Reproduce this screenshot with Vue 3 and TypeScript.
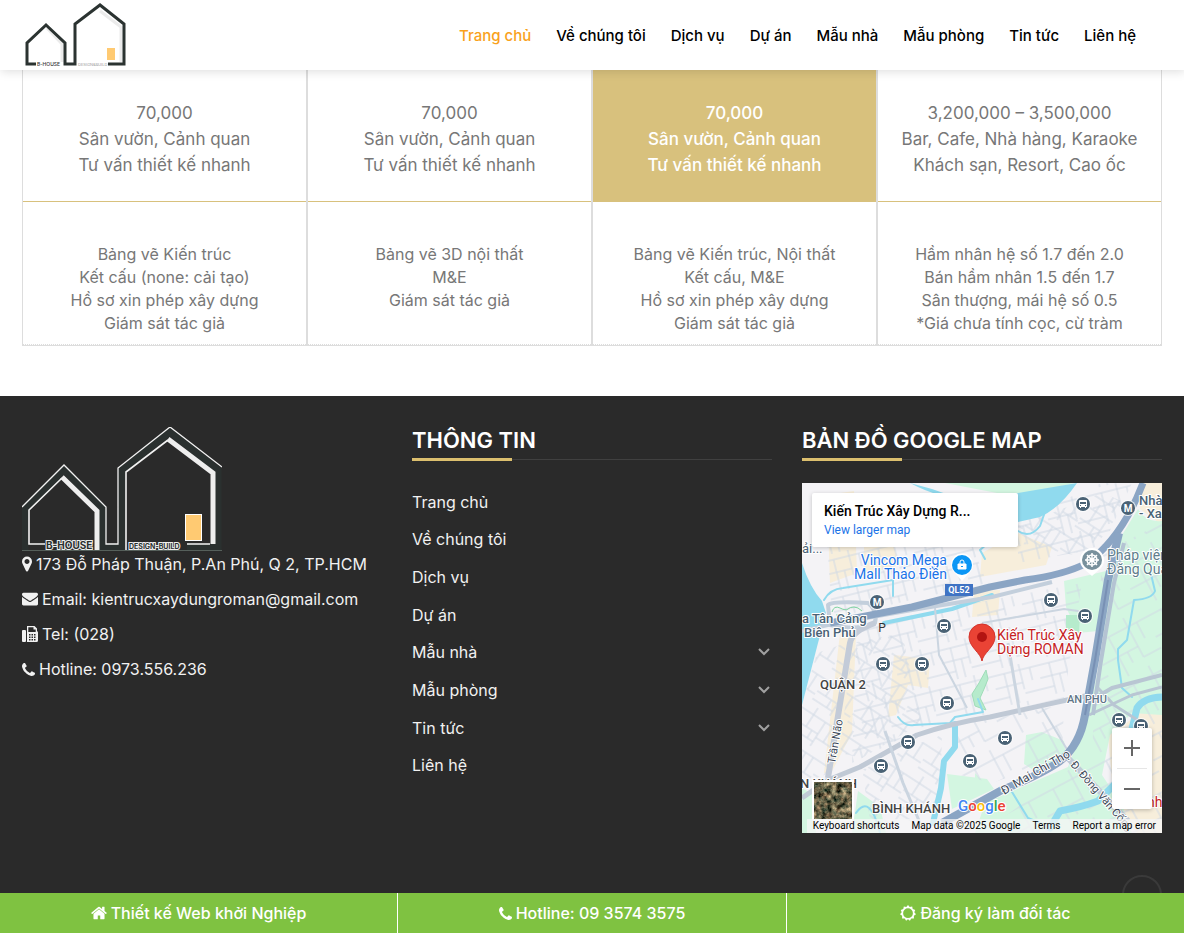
<script setup lang="ts">
interface NavItem {
  label: string
  active?: boolean
  expandable?: boolean
}

interface Plan {
  price: string[]
  details: string[]
  featured?: boolean
}

interface Road {
  d: string
  color: string
  width: number
}

const menu: NavItem[] = [
  { label: 'Trang chủ', active: true },
  { label: 'Về chúng tôi' },
  { label: 'Dịch vụ' },
  { label: 'Dự án' },
  { label: 'Mẫu nhà', expandable: true },
  { label: 'Mẫu phòng', expandable: true },
  { label: 'Tin tức', expandable: true },
  { label: 'Liên hệ' },
]

const plans: Plan[] = [
  {
    price: ['70,000', 'Sân vườn, Cảnh quan', 'Tư vấn thiết kế nhanh'],
    details: ['Bảng vẽ Kiến trúc', 'Kết cấu (none: cải tạo)', 'Hồ sơ xin phép xây dựng', 'Giám sát tác giả'],
  },
  {
    price: ['70,000', 'Sân vườn, Cảnh quan', 'Tư vấn thiết kế nhanh'],
    details: ['Bảng vẽ 3D nội thất', 'M&E', 'Giám sát tác giả'],
  },
  {
    price: ['70,000', 'Sân vườn, Cảnh quan', 'Tư vấn thiết kế nhanh'],
    details: ['Bảng vẽ Kiến trúc, Nội thất', 'Kết cấu, M&E', 'Hồ sơ xin phép xây dựng', 'Giám sát tác giả'],
    featured: true,
  },
  {
    price: ['3,200,000 – 3,500,000', 'Bar, Cafe, Nhà hàng, Karaoke', 'Khách sạn, Resort, Cao ốc'],
    details: ['Hầm nhân hệ số 1.7 đến 2.0', 'Bán hầm nhân 1.5 đến 1.7', 'Sân thượng, mái hệ số 0.5', '*Giá chưa tính cọc, cừ tràm'],
  },
]

const icons = {
  marker:
    'M1152 640q0-106-75-181t-181-75-181 75-75 181 75 181 181 75 181-75 75-181zm256 0q0 109-33 179l-364 774q-16 33-47.5 52t-67.5 19-67.5-19-46.5-52l-365-774q-33-70-33-179 0-212 150-362t362-150 362 150 150 362z',
  envelope:
    'M1792 710v794q0 66-47 113t-113 47h-1472q-66 0-113-47t-47-113v-794q44 49 101 87 362 246 497 345 57 42 92.5 65.5t94.5 48 110 24.5h2q51 0 110-24.5t94.5-48 92.5-65.5q170-123 498-345 57-39 100-87zm0-294q0 79-49 151t-122 123q-376 261-468 325-10 7-42.5 31t-54 38.5-52 32.5-57.5 27-50 9h-2q-23 0-50-9t-57.5-27-52-32.5-54-38.5-42.5-31q-91-64-262-182.5t-205-142.5q-62-42-117-115.5t-55-136.5q0-78 41.5-130t118.5-52h1472q65 0 112.5 47t47.5 113z',
  phone:
    'M1600 1240q0 27-10 70.5t-21 68.5q-21 50-122 106-94 51-186 51-27 0-53-3.5t-57.5-12.5-47-14.5-55.5-20.5-49-18q-98-35-175-83-127-79-264-216t-216-264q-48-77-83-175-3-9-18-49t-20.5-55.5-14.5-47-12.5-57.5-3.5-53q0-92 51-186 56-101 106-122 25-11 68.5-21t70.5-10q14 0 21 3 18 6 53 76 11 19 30 54t35 63.5 31 53.5q3 4 17.5 25t21.5 35.5 7 28.5q0 20-28.5 50t-62 55-62 53-28.5 46q0 9 5 22.5t8.5 20.5 14 24 11.5 19q76 137 174 235t235 174q2 1 19 11.5t24 14 20.5 8.5 22.5 5q18 0 46-28.5t53-62 55-62 50-28.5q14 0 28.5 7t35.5 21.5 25 17.5q25 15 53.5 31t63.5 35 54 30q70 35 76 53 3 7 3 21z',
  home: 'M1472 992v480q0 26-19 45t-45 19h-384v-384h-256v384h-384q-26 0-45-19t-19-45v-480q0-1 .5-3t.5-3l575-474 575 474q1 2 1 6zm223-69l-62 74q-8 9-21 11h-3q-13 0-21-7l-692-577-692 577q-12 8-24 7-13-2-21-11l-62-74q-8-10-7-23.5t11-21.5l719-599q32-26 76-26t76 26l244 204v-195q0-14 9-23t23-9h192q14 0 23 9t9 23v408l219 182q10 8 11 21.5t-7 23.5z',
}

const roads: Road[] = [
  { d: 'M0 148L30 141L110 127L190 114L250 99', color: '#c3cfdc', width: 4 },
  { d: 'M26 122Q30 118 66 120Q76 128 73 140Q60 148 28 142Z', color: '#c3cfdc', width: 4 },
  { d: 'M73 140Q50 148 48 160L46 172L35 239L26 295', color: '#c3cbd8', width: 6 },
  { d: 'M0 315L26 297L58 284L115 252Q150 240 188 234L283 213', color: '#c0c9d5', width: 5 },
  { d: 'M293 215L310 205L360 192', color: '#b9c6d3', width: 4 },
  { d: 'M287 232L330 212L360 204', color: '#b9c6d3', width: 3 },
  { d: 'M266 275L326 338', color: '#c0cbd8', width: 6 },
  { d: 'M322 60L312 100L299 178L291 232', color: '#b4c3d3', width: 4 },
  { d: 'M83 248L101 300L118 340', color: '#cbd5e0', width: 3 },
  { d: 'M206 160L218 232', color: '#cbd5e0', width: 3 },
  { d: 'M240 225L266 268', color: '#cbd5e0', width: 2 },
  { d: 'M133 125L137 172L165 225', color: '#cbd5e0', width: 2 },
  { d: 'M180 140L262 126L290 130', color: '#cbd5e0', width: 2 },
  { d: 'M296 205L312 222L340 240', color: '#b9c6d3', width: 3 },
  { d: 'M28 140L110 124L188 104L223 97Q262 92 285 80Q320 55 341 0', color: '#8ba5c4', width: 7 },
  { d: 'M317 50L306 97L293 177L283 232Q278 262 258 278Q240 291 200 307L140 340', color: '#8ba5c4', width: 8 },
  { d: 'M306 97L293 177L283 232', color: '#7890b4', width: 2 },
]

const busStops: number[][] = [
  [281, 21], [249, 117], [283, 133], [142, 143], [81, 181], [120, 181], [145, 220],
  [106, 259], [79, 283], [168, 278], [203, 255], [317, 237], [339, 243],
]
const metroStops: number[][] = [[75, 119], [326, 25]]
</script>

<template>
  <div class="page">
    <header class="header">
      <a class="logo" href="#" aria-label="B-House Design &amp; Build">
        <svg width="104" height="66" viewBox="0 0 104 66">
          <path d="M23 26L38 42V60M76 9L97 25V60" fill="none" stroke="#ebebeb" stroke-width="3" />
          <path d="M12 62H3V41L22 23L41 41V62H51V22L76 3L100 22V62H84" fill="none" stroke="#2b3331" stroke-width="3" />
          <rect x="83" y="46" width="8" height="12" fill="#ffca72" />
          <text x="13" y="64" font-size="5" font-weight="500" fill="#333">B-HOUSE</text>
          <text x="54" y="64" font-size="4" fill="#999">DESIGN&amp;BUILD</text>
        </svg>
      </a>
      <nav class="nav">
        <a v-for="item in menu" :key="item.label" href="#" :class="{ active: item.active }">{{ item.label }}</a>
      </nav>
    </header>

    <main class="plans">
      <ul v-for="(plan, i) in plans" :key="i" class="plan">
        <li class="price" :class="{ featured: plan.featured }">
          <span v-for="line in plan.price" :key="line">{{ line }}</span>
        </li>
        <li class="details">
          <span v-for="line in plan.details" :key="line">{{ line }}</span>
        </li>
      </ul>
    </main>

    <footer class="footer">
      <section class="contact">
        <svg class="footer-logo" width="200" height="124" viewBox="0 0 200 124">
          <path d="M3 124V81L42 43L80 81V120H100V43L148 5L196 43V120H165" fill="none" stroke="#2a302f" stroke-width="7" />
          <path d="M0 80L42 38L84 80V117H96V41L148 0L200 40" fill="none" stroke="#f2f2f2" stroke-width="1.3" />
          <path d="M23 117H7V83L40 51M104 124V45L146 13M165 117H188" fill="none" stroke="#f2f2f2" stroke-width="1.6" />
          <path d="M40 50L75 84V124M146 12L191 46V117" fill="none" stroke="#eee" stroke-width="5" />
          <path d="M0 123.500H200" stroke="#56605b" />
          <rect x="163.500" y="87.500" width="16" height="26" fill="#ffca72" stroke="#fff" />
          <text class="outlined" x="24" y="122" font-size="10">B-HOUSE</text>
          <text class="outlined" x="107" y="122" font-size="7">DESIGN-BUILD</text>
        </svg>
        <p>
          <svg width="10" height="16" viewBox="384 128 1024 1536"><path :d="icons.marker" /></svg>
          173 Đỗ Pháp Thuận, P.An Phú, Q 2, TP.HCM
        </p>
        <p>
          <svg width="16" height="14" viewBox="0 200 1792 1500"><path :d="icons.envelope" /></svg>
          Email: kientrucxaydungroman@gmail.com
        </p>
        <p>
          <svg width="16" height="16" viewBox="0 0 16 16">
            <rect x="0" y="4" width="4" height="12" rx="1" />
            <path fill-rule="evenodd" d="M5 0H12.500L15 2.500V5Q16 5.500 16 6.500V14.500Q16 16 14.500 16H5ZM6.300 1.300V6H13.700V3.500H11.500V1.300ZM7 8V9.500H8.500V8ZM9.500 8V9.500H11V8ZM12 8V9.500H13.500V8ZM7 10.500V12H8.500V10.500ZM9.500 10.500V12H11V10.500ZM12 10.500V12H13.500V10.500ZM7 13V14.500H8.500V13ZM9.500 13V14.500H11V13ZM12 13V14.500H13.500V13Z" />
          </svg>
          Tel: (028)
        </p>
        <p>
          <svg width="13" height="13" viewBox="192 128 1408 1408"><path :d="icons.phone" /></svg>
          Hotline: 0973.556.236
        </p>
      </section>

      <section>
        <h2>THÔNG TIN</h2>
        <ul class="links">
          <li v-for="item in menu" :key="item.label">
            <a href="#">{{ item.label }}</a>
            <button v-if="item.expandable" type="button" :aria-label="item.label">
              <svg width="12" height="8" viewBox="0 0 12 8"><path d="M1 1L6 6L11 1" fill="none" stroke="#a0a0a0" stroke-width="2" /></svg>
            </button>
          </li>
        </ul>
      </section>

      <section>
        <h2>BẢN ĐỒ GOOGLE MAP</h2>
        <div class="map">
          <svg class="map-canvas" viewBox="0 0 360 350" preserveAspectRatio="xMidYMid slice">
            <defs>
              <pattern id="streets-a" width="46" height="38" patternUnits="userSpaceOnUse" patternTransform="rotate(-14)">
                <path d="M0 6H46M0 19H28M12 6V38M28 0V26M28 30H46M38 6V19M0 30H12M20 19V38" />
              </pattern>
              <pattern id="streets-b" width="42" height="36" patternUnits="userSpaceOnUse" patternTransform="rotate(33)">
                <path d="M0 8H42M0 22H24M10 0V22M24 8V36M33 8V26M24 26H42M0 31H24M17 22V31" />
              </pattern>
              <pattern id="streets-c" width="60" height="54" patternUnits="userSpaceOnUse" patternTransform="rotate(-28)">
                <path d="M0 10H60M0 32H40M18 10V54M40 0V44M40 44H60M28 32V44M50 10V28" />
              </pattern>
              <filter id="aerial" x="0" y="0" width="1" height="1" color-interpolation-filters="sRGB">
                <feTurbulence type="fractalNoise" baseFrequency="0.2" numOctaves="4" seed="4" />
                <feColorMatrix values="1.2 0 0 0 -0.2  1 0.2 0 0 -0.22  0.8 0.2 0 0 -0.22  0 0 0 0 1" />
              </filter>
            </defs>
            <rect width="360" height="350" fill="#f4f3f6" />
            <g fill="#f7eedb">
              <path d="M25 12L52 8L55 90L28 100ZM62 64L92 64L98 82L62 92ZM216 50L250 64L244 82L178 94L180 70ZM92 172L128 176L126 205L106 202L94 232L86 234ZM172 108L198 107L196 132L170 134ZM38 150L54 150L50 250L28 292L22 290ZM341 0H360V42L338 26ZM306 252L345 226L360 232V350H335L312 320Z" />
            </g>
            <g fill="#d3f6e1">
              <path d="M143 0H272L216 14ZM320 52L336 26Q344 40 360 38V232L330 230L308 252L300 292L320 322L330 350H173L183 320L266 284L286 232L298 178L308 97ZM262 98L304 88L296 148L276 150L264 124ZM224 252L240 249L262 258L264 274L236 290L222 281ZM145 291L185 296L192 306L150 326ZM0 305L12 312L14 350H0ZM56 308L78 324L84 350H50ZM173 290L184 302L173 310Z" />
            </g>
            <g>
              <path d="M22 10H150L185 100L30 135ZM216 37L300 0H330L300 65L216 80Z" fill="url(#streets-a)" />
              <path d="M55 142L280 100L262 215L190 230L120 245L50 280Z" fill="url(#streets-a)" />
              <path d="M0 220L15 170L44 160L28 290L0 300ZM50 160L100 150L120 240L60 275L38 270ZM60 287L140 250L138 330L70 350Z" fill="url(#streets-b)" />
              <path d="M155 240L262 222L260 275L190 300L150 290ZM300 70L360 40V350H180L290 270Z" fill="url(#streets-c)" />
              <path d="M216 12L250 30L300 10L325 20L285 75L216 60Z" fill="url(#streets-b)" />
            </g>
            <path d="M184 187L177 200L170 211L173 223L184 227L178 215L182 206L186 196Z" fill="#b6ebcc" stroke="#9fdcb8" />
            <path d="M264 132L278 132L277 150L264 147Z" fill="#b6ebcc" />
            <g fill="none" stroke="#90daee" stroke-linecap="round" stroke-linejoin="round">
              <path d="M22 117Q28 106 41 105L91 97V113M216 48Q228 56 238 43L244 26M96 234Q103 244 112 242L148 240L153 234L181 229L176 216M348 87L353 108Q350 116 332 117L325 157L316 166V177L320 205L330 214M183 76L178 67L192 55M54 330Q68 310 78 350M210 309L226 335L238 340" stroke-width="2" />
              <path d="M82 140L150 126L190 112" stroke-width="4" />
              <path d="M153 241V264L142 278L139 305L131 340" stroke-width="6" />
              <path d="M248 345L258 328Q280 324 296 318L318 296L335 225Q342 214 362 214" stroke-width="7" />
            </g>
            <path d="M108 0Q160 28 216 10L275 0Q258 25 238 34L216 39L170 20L130 6Z" fill="#90daee" />
            <path d="M0 80Q8 105 20 118L24 130L16 160L0 222Z" fill="#90daee" />
            <path v-for="(road, i) in roads" :key="i" :d="road.d" :stroke="road.color" :stroke-width="road.width" fill="none" stroke-linejoin="round" />
            <path d="M30 129Q32 122 38 125T46 126T52 124T60 128M34 132H38" fill="none" stroke="#7fd3a0" />

            <g v-for="([x, y], i) in busStops" :key="'bus' + i" :transform="`translate(${x} ${y})`">
              <circle r="8" fill="#fff" opacity="0.8" />
              <circle r="7" fill="#4a6275" />
              <path fill-rule="evenodd" fill="#fff" d="M-4 -3Q-4 -4 -3 -4H3Q4 -4 4 -3V3H3V4H2V3H-2V4H-3V3H-4ZM-3 -2V0H3V-2ZM-3 1V2H-2V1ZM2 1V2H3V1Z" />
            </g>
            <g v-for="([x, y], i) in metroStops" :key="'metro' + i" :transform="`translate(${x} ${y})`">
              <circle r="8" fill="#fff" opacity="0.8" />
              <circle r="7" fill="#4a6275" />
              <text y="4" font-size="10" font-weight="700" fill="#fff" text-anchor="middle">M</text>
            </g>
            <text x="80" y="149" font-size="12" fill="#333" text-anchor="middle">P</text>

            <rect x="143" y="101" width="28" height="12" fill="#3f73c4" />
            <text x="157" y="110" font-size="9" font-weight="700" fill="#fff" text-anchor="middle">QL52</text>

            <g class="halo" font-size="14">
              <g fill="#1a73e8" text-anchor="end">
                <text x="145" y="82">Vincom Mega</text>
                <text x="145" y="96">Mall Thảo Điền</text>
              </g>
              <g fill="#4a6275" font-size="13">
                <text x="0" y="70">ải...</text>
                <text x="0" y="140" font-weight="500">a Tân Cảng</text>
                <text x="2" y="154" font-weight="500">Biên Phủ</text>
                <text x="337" y="22" font-weight="500">Nhà</text>
                <text x="337" y="35" font-weight="500">- Xa</text>
              </g>
              <g fill="#607d8b">
                <text x="305" y="77">Pháp viện</text>
                <text x="305" y="91">Đăng Quang</text>
              </g>
              <g fill="#c5221f">
                <text x="195" y="157">Kiến Trúc Xây</text>
                <text x="195" y="171">Dựng ROMAN</text>
                <text x="345" y="324">nh</text>
              </g>
              <g fill="#444" font-size="13" font-weight="500">
                <text x="18" y="206">QUẬN 2</text>
                <text x="-2" y="305">N KHÁNH</text>
                <text x="70" y="330">BÌNH KHÁNH</text>
                <text x="265" y="220" font-size="11" fill="#5f7486">AN PHU</text>
              </g>
              <g fill="#3c4858" font-size="12">
                <text transform="translate(33 281) rotate(-80)" font-size="11">Trần Não</text>
                <text transform="translate(202 312) rotate(-30)">Đ. Mai Chí Thọ</text>
                <text transform="translate(268 282) rotate(49)" font-size="11">Đ. Đồng Văn Cống</text>
              </g>
            </g>

            <path d="M160 98L153 90A11 11 0 1 1 167 90Z" fill="#fff" />
            <circle cx="160" cy="82" r="10" fill="#0b96f5" />
            <path d="M156 81H164V86H156Z" fill="#fff" stroke="#fff" />
            <path d="M158 81V79Q158 77 160 77T162 79V81" fill="none" stroke="#fff" />
            <path d="M159 83Q160 85 161 83" fill="none" stroke="#0b96f5" />
            <path d="M290 93L282 86A12 12 0 1 1 298 86Z" fill="#fff" />
            <circle cx="290" cy="77" r="10" fill="#78909c" />
            <circle cx="290" cy="77" r="5" fill="none" stroke="#fff" stroke-width="1.500" />
            <path d="M283 77H297M290 70V84M285 72L295 82M285 82L295 72" stroke="#fff" stroke-width="1.500" />
            <path d="M180 178C179 170 167 164 167 154A13 13 0 0 1 193 154C193 164 181 170 180 178Z" fill="#ea4335" stroke="#d3322a" />
            <circle cx="180" cy="154" r="5" fill="#b31412" />

            <g class="halo" font-size="15" font-weight="500">
              <text x="156" y="328"><tspan fill="#4285f4">G</tspan><tspan fill="#ea4335">o</tspan><tspan fill="#fbbc04">o</tspan><tspan fill="#4285f4">g</tspan><tspan fill="#34a853">l</tspan><tspan fill="#ea4335">e</tspan></text>
            </g>
            <rect x="10" y="297" width="42" height="41" fill="#fff" />
            <rect x="12" y="299" width="38" height="37" filter="url(#aerial)" />
          </svg>

          <div class="place">
            <strong>Kiến Trúc Xây Dựng R...</strong>
            <a href="#">View larger map</a>
          </div>
          <div class="zoom">
            <button type="button" aria-label="Zoom in">
              <svg width="18" height="18" viewBox="0 0 18 18"><path d="M1 9H17M9 1V17" stroke="#666" stroke-width="2" /></svg>
            </button>
            <button type="button" aria-label="Zoom out">
              <svg width="18" height="18" viewBox="0 0 18 18"><path d="M1 9H17" stroke="#666" stroke-width="2" /></svg>
            </button>
          </div>
          <div class="legal">
            <button type="button">Keyboard shortcuts</button>
            <span>Map data ©2025 Google</span>
            <a href="#">Terms</a>
            <a href="#">Report a map error</a>
          </div>
        </div>
      </section>
      <button class="to-top" type="button" aria-label="Back to top"></button>
    </footer>

    <nav class="bottom-bar">
      <a href="#">
        <svg width="16" height="14" viewBox="64 192 1664 1408"><path :d="icons.home" /></svg>
        Thiết kế Web khởi Nghiệp
      </a>
      <a href="#">
        <svg width="13" height="13" viewBox="192 128 1408 1408"><path :d="icons.phone" /></svg>
        Hotline: 09 3574 3575
      </a>
      <a href="#">
        <svg width="16" height="16" viewBox="0 0 16 16">
          <path fill-rule="evenodd" d="M8 0L9.700 2L12.200 1.400L12.700 4L15.200 4.900L14.300 7.300L16 9.200L13.900 10.800L13.900 13.400L11.300 13.400L9.900 15.700L8 14.200L6.100 15.700L4.700 13.400L2.100 13.400V10.800L0 9.200L1.700 7.300L0.800 4.900L3.300 4L3.800 1.400L6.300 2ZM8 3.300A4.900 4.900 0 1 0 8 13.100A4.900 4.900 0 1 0 8 3.300Z" />
        </svg>
        Đăng ký làm đối tác
      </a>
    </nav>
  </div>
</template>

<style>
body {
  margin: 0;
}
</style>

<style scoped>
.page {
  display: flex;
  flex-direction: column;
  min-height: 100vh;
  background: #fff;
  color: #777;
  font-family: Inter, "Liberation Sans", sans-serif;
  font-size: 16px;
}
.page * {
  box-sizing: border-box;
}
a {
  color: inherit;
  text-decoration: none;
}
ul {
  margin: 0;
  padding: 0;
  list-style: none;
}
button {
  border: 0;
  padding: 0;
  background: none;
  color: inherit;
  font: inherit;
  cursor: pointer;
}

.header {
  position: relative;
  z-index: 1;
  display: flex;
  align-items: center;
  justify-content: space-between;
  height: 70px;
  padding: 0 48px 0 24px;
  background: #fff;
  box-shadow: 1px 1px 10px rgba(0, 0, 0, 0.15);
}
.logo svg {
  display: block;
}
.nav {
  display: flex;
  gap: 25px;
  color: #000;
  font-size: 15px;
  font-weight: 500;
}
.nav .active {
  color: #f9a11b;
}

.plans {
  display: grid;
  grid-template-columns: repeat(4, 1fr);
  padding: 0 22px 50px;
  text-align: center;
}
.plan {
  display: flex;
  flex-direction: column;
  border: 1px solid #ddd;
  border-top: 0;
}
.plan span {
  display: block;
}
.price {
  padding: 30px 0 23px;
  border-bottom: 1px solid #d8c17d;
  font-size: 17px;
  line-height: 26px;
}
.featured {
  background: #d8c17d;
  color: #fff;
  font-weight: 500;
}
.details {
  flex: 1;
  padding: 41px 0 9px;
  border-bottom: 1px dotted #ddd;
  font-size: 16px;
  line-height: 23px;
}

.footer {
  position: relative;
  flex: 1;
  display: grid;
  grid-template-columns: repeat(3, minmax(0, 1fr));
  gap: 30px;
  overflow: hidden;
  padding: 31px 22px 60px;
  background: #2a2a2a;
  color: #f1f1f1;
}
.footer-logo {
  display: block;
}
.outlined {
  fill: #2a302f;
  stroke: #eee;
  stroke-width: 2px;
  paint-order: stroke;
  font-weight: 700;
}
.contact p {
  display: flex;
  align-items: center;
  gap: 4px;
  margin: 0 0 9px;
  font-size: 16px;
  line-height: 26px;
  white-space: nowrap;
}
.contact p svg,
.bottom-bar svg {
  flex: none;
  fill: currentColor;
}
h2 {
  position: relative;
  margin: 0 0 23px;
  padding-bottom: 6px;
  border-bottom: 1px solid #404040;
  color: #fff;
  font-size: 22px;
  font-weight: 600;
  line-height: 26px;
}
h2::after {
  content: "";
  position: absolute;
  left: 0;
  bottom: -2px;
  width: 100px;
  height: 3px;
  background: #dcbf6e;
}
.links {
  display: grid;
  grid-template-rows: repeat(8, 1fr);
  height: 301px;
  font-size: 16px;
}
.links li {
  display: flex;
  align-items: center;
  justify-content: space-between;
}
.links svg {
  display: block;
  margin-right: 2px;
}

.map {
  position: relative;
  height: 350px;
  overflow: hidden;
  font-family: Roboto, sans-serif;
}
.map-canvas {
  display: block;
  width: 100%;
  height: 100%;
}
pattern path {
  fill: none;
  stroke: #d0d9e4;
  stroke-width: 1px;
}
.halo text {
  stroke: #fff;
  stroke-width: 2px;
  stroke-linejoin: round;
  paint-order: stroke;
}
.place {
  position: absolute;
  top: 10px;
  left: 10px;
  display: flex;
  flex-direction: column;
  gap: 3px;
  width: 206px;
  height: 54px;
  padding: 10px 12px;
  background: #fff;
  border-radius: 2px;
  box-shadow: 0 1px 4px rgba(0, 0, 0, 0.2);
  color: #000;
}
.place strong {
  font-size: 14px;
  font-weight: 500;
  line-height: 17px;
}
.place a {
  color: #1a73e8;
  font-size: 12px;
  line-height: 15px;
}
.zoom {
  position: absolute;
  right: 10px;
  bottom: 24px;
  width: 40px;
  background: #fff;
  border-radius: 2px;
  box-shadow: 0 1px 4px rgba(0, 0, 0, 0.25);
}
.zoom button {
  display: grid;
  place-items: center;
  width: 30px;
  height: 40px;
  margin: 0 5px;
}
.zoom button + button {
  height: 41px;
  border-top: 1px solid #e6e6e6;
}
.legal {
  position: absolute;
  right: 0;
  bottom: 0;
  display: flex;
  gap: 12px;
  padding: 0 6px;
  background: rgba(245, 245, 245, 0.75);
  color: #000;
  font-size: 10px;
  line-height: 14px;
  white-space: nowrap;
}
.to-top {
  position: absolute;
  right: 22px;
  bottom: -22px;
  width: 40px;
  height: 40px;
  border: 2px solid #3a3a3a;
  border-radius: 50%;
}

.bottom-bar {
  display: grid;
  grid-template-columns: 397fr 389fr 398fr;
  height: 40px;
  background: #7fc241;
  color: #fff;
  font-size: 16px;
  font-weight: 500;
}
.bottom-bar a {
  display: flex;
  align-items: center;
  justify-content: center;
  gap: 4px;
}
.bottom-bar a + a {
  border-left: 1px solid #fff;
}
</style>
